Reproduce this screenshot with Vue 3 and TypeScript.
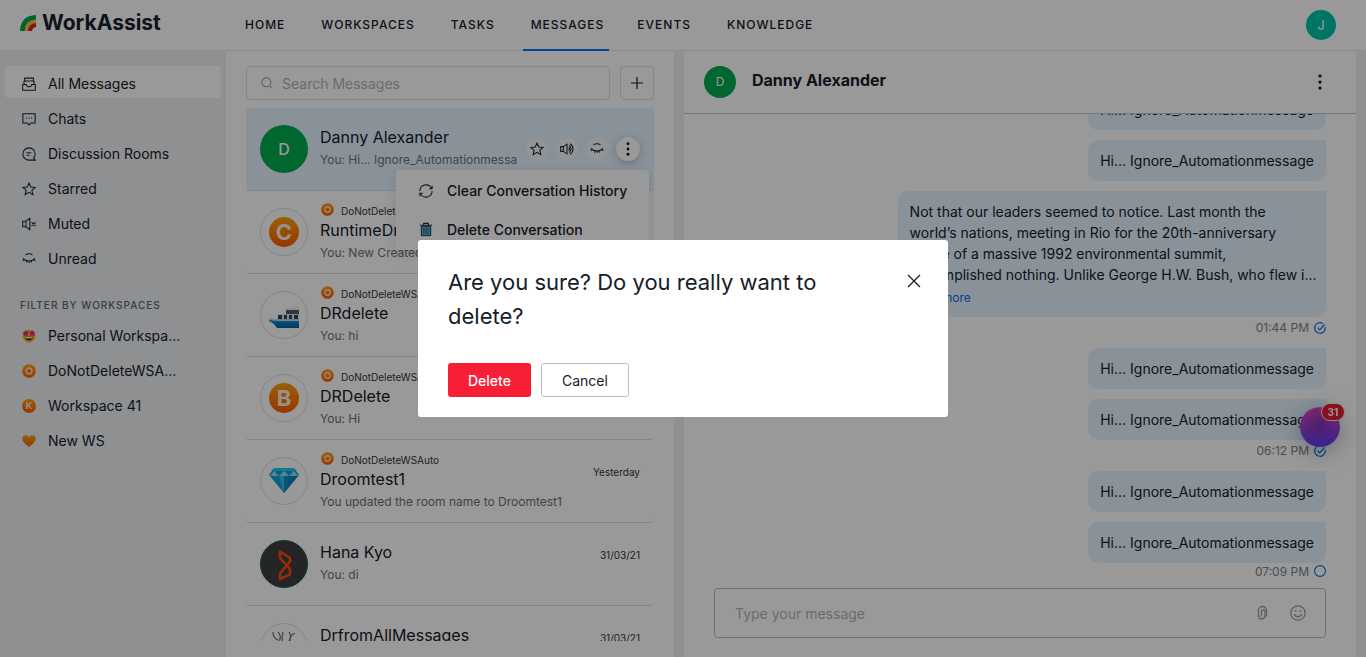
<script setup lang="ts">
import { ref } from 'vue'

interface NavItem { label: string; active?: boolean }
interface Conversation {
  id: number
  name: string
  preview: string
  avatar: 'green' | 'letter' | 'ship' | 'gem' | 'mark' | 'sketch'
  letter?: string
  workspace?: string
  date?: string
  open?: boolean
}
interface Message { id: number; text: string; long?: boolean; time?: string; state?: 'read' | 'sending' }

const nav: NavItem[] = [
  { label: 'HOME' },
  { label: 'WORKSPACES' },
  { label: 'TASKS' },
  { label: 'MESSAGES', active: true },
  { label: 'EVENTS' },
  { label: 'KNOWLEDGE' },
]

const folders = [
  { label: 'All Messages', icon: 'inbox' },
  { label: 'Chats', icon: 'chat' },
  { label: 'Discussion Rooms', icon: 'room' },
  { label: 'Starred', icon: 'star' },
  { label: 'Muted', icon: 'muted' },
  { label: 'Unread', icon: 'unread' },
]

const workspaces = [
  { label: 'Personal Workspa...', icon: 'face' },
  { label: 'DoNotDeleteWSA...', icon: 'ring' },
  { label: 'Workspace 41', icon: 'k' },
  { label: 'New WS', icon: 'heart' },
]

const conversations: Conversation[] = [
  { id: 1, name: 'Danny Alexander', preview: 'You: Hi... Ignore_Automationmessage', avatar: 'green', letter: 'D', open: true },
  { id: 2, name: 'RuntimeDroom', preview: 'You: New Created', avatar: 'letter', letter: 'C', workspace: 'DoNotDeleteWSAuto' },
  { id: 3, name: 'DRdelete', preview: 'You: hi', avatar: 'ship', workspace: 'DoNotDeleteWSAuto' },
  { id: 4, name: 'DRDelete', preview: 'You: Hi', avatar: 'letter', letter: 'B', workspace: 'DoNotDeleteWSAuto' },
  { id: 5, name: 'Droomtest1', preview: 'You updated the room name to Droomtest1', avatar: 'gem', workspace: 'DoNotDeleteWSAuto', date: 'Yesterday' },
  { id: 6, name: 'Hana Kyo', preview: 'You: di', avatar: 'mark', date: '31/03/21' },
  { id: 7, name: 'DrfromAllMessages', preview: 'You: hi', avatar: 'sketch', date: '31/03/21' },
]

const hi = 'Hi... Ignore_Automationmessage'
const messages: Message[] = [
  { id: 1, text: hi },
  { id: 2, text: hi },
  {
    id: 3,
    long: true,
    text: 'Not that our leaders seemed to notice. Last month the\nworld’s nations, meeting in Rio for the 20th-anniversary\nscene of a massive 1992 environmental summit,\naccomplished nothing. Unlike George H.W. Bush, who flew i...',
    time: '01:44 PM',
    state: 'read',
  },
  { id: 4, text: hi },
  { id: 5, text: hi, time: '06:12 PM', state: 'read' },
  { id: 6, text: hi },
  { id: 7, text: hi, time: '07:09 PM', state: 'sending' },
]

const search = ref('')
const draft = ref('')
const confirming = ref(true)
</script>

<template>
  <div class="app">
    <svg class="defs" aria-hidden="true">
      <defs>
        <linearGradient id="orange" x1="0" y1="0" x2="0" y2="1">
          <stop offset="0" stop-color="#ff9f0a" /><stop offset="1" stop-color="#ff5a00" />
        </linearGradient>
        <linearGradient id="hull" x1="0" y1="0" x2="0" y2="1">
          <stop offset="0" stop-color="#1c9be0" /><stop offset="1" stop-color="#00619c" />
        </linearGradient>
        <symbol id="i-inbox" viewBox="0 0 16 16">
          <path d="M3 4.300V1.300h10v3M2 4.500h12M2.300 4.500v4M13.700 4.500v4M.800 8.500v6.700h14.400V8.500h-4c-.2 1.800-1.300 2.700-3.200 2.700S5 10.300 4.800 8.500z" />
        </symbol>
        <symbol id="i-chat" viewBox="0 0 16 16">
          <path d="M1 2h14v10.500h-5L8 14.800l-2-2.300H1zM4.500 7h1M7.500 7h1M10.500 7h1" />
        </symbol>
        <symbol id="i-room" viewBox="0 0 16 16">
          <path d="M15.300 15H8A7 7 0 1 1 15 8c0 2-.7 3.700-1.900 4.900zM5.300 6.500h5.200M5.300 9.500h3.200" />
        </symbol>
        <symbol id="i-star" viewBox="0 0 16 16">
          <path d="m8 1.200 2 4.500 5 .5-3.700 3.300 1.100 5L8 11.900l-4.400 2.600 1.100-5L1 6.200l5-.5z" />
        </symbol>
        <symbol id="i-muted" viewBox="0 0 16 16">
          <path d="M.800 4.800h3.700v6.400H.800zM4.500 4.800 9 1.500v13l-4.500-3.300M11 5.800l4.500 4.500M15.500 5.800 11 10.300" />
        </symbol>
        <symbol id="i-sound" viewBox="0 0 16 16">
          <path d="M.800 5.300h3v5.400h-3zM3.800 5.300 8 2.500v11l-4.200-2.800M10 6a3 3 0 0 1 0 4M10.300 3.800a5 5 0 0 1 0 8.400M11.500 2a7 7 0 0 1 0 12" />
        </symbol>
        <symbol id="i-unread" viewBox="0 0 16 16">
          <path d="M4 3.200c2.600-1.500 5.400-1.500 8 0M1 7.200c3.800 4 10.200 4 14 0M2.800 8.600 .8 10.200M5.700 10.200l-.8 2M8 10.600v2.100M10.300 10.200l.8 2M13.200 8.600l2 1.600" />
        </symbol>
        <symbol id="i-refresh" viewBox="0 0 16 16">
          <path d="M1 8A7 7 0 0 1 14.300 5M15 8A7 7 0 0 1 1.700 11M15 2v3.400h-3.400M1 14v-3.400h3.400" />
        </symbol>
        <symbol id="i-ring" viewBox="0 0 14 14">
          <circle cx="7" cy="7" r="6.800" fill="url(#orange)" stroke="none" />
          <circle cx="7" cy="7" r="2.900" fill="none" stroke="#ffdfbd" stroke-width="1.500" />
        </symbol>
      </defs>
    </svg>

    <header class="topbar">
      <a class="brand" href="#">
        <svg class="rainbow" viewBox="0 0 16 16" aria-hidden="true">
          <path d="M2.500 16Q3 3 16 2.500" fill="none" stroke="#00a651" stroke-width="5" />
          <path d="M6.500 16Q7 7 16 6.500" fill="none" stroke="#f7c331" stroke-width="4" />
          <path d="M10 16Q10.500 10.500 16 10" fill="none" stroke="#e21b36" stroke-width="4" />
        </svg>
        <span>WorkAssist</span>
      </a>
      <nav class="nav">
        <a v-for="n in nav" :key="n.label" href="#" :class="{ active: n.active }">{{ n.label }}</a>
      </nav>
      <button class="me" aria-label="Account">J</button>
    </header>

    <main class="body">
      <aside class="side">
        <a v-for="(f, i) in folders" :key="f.label" href="#" class="side-item" :class="{ current: i === 0 }">
          <svg class="line-icon" aria-hidden="true"><use :href="'#i-' + f.icon" /></svg>
          <span>{{ f.label }}</span>
        </a>
        <h2 class="side-title">FILTER BY WORKSPACES</h2>
        <a v-for="w in workspaces" :key="w.label" href="#" class="side-item">
          <svg v-if="w.icon === 'face'" class="ws-icon" viewBox="0 0 14 14" aria-hidden="true">
            <circle cx="7" cy="7" r="6.500" fill="#ffb51f" />
            <path d="m3.800 1.500.9 1.600 1.900.3-1.300 1.400.3 1.900-1.800-.8-1.800.8.3-1.900L1 3.400l1.900-.3zM10.200 1.500l.9 1.600 1.900.3-1.300 1.400.3 1.900-1.800-.8-1.800.8.3-1.900-1.300-1.400 1.900-.3z" fill="#e0218a" stroke="#e0218a" stroke-width=".6" />
            <path d="M3.200 7.800h7.600c0 5-7.600 5-7.600 0z" fill="#4a2a18" />
            <path d="M3.800 8h6.400v1.300H3.800z" fill="#fff" />
          </svg>
          <svg v-else-if="w.icon === 'ring'" class="ws-icon" aria-hidden="true"><use href="#i-ring" /></svg>
          <span v-else-if="w.icon === 'k'" class="ws-icon ws-letter">K</span>
          <svg v-else class="ws-icon" viewBox="0 0 14 14" aria-hidden="true">
            <path d="M7 12.800C3 10 .3 7.500.3 4.700.3 1 5 .2 7 3.200 9 .2 13.700 1 13.700 4.700c0 2.800-2.700 5.300-6.700 8.100z" fill="url(#orange)" />
          </svg>
          <span>{{ w.label }}</span>
        </a>
      </aside>

      <section class="inbox">
        <div class="tools">
          <label class="search">
            <svg viewBox="0 0 12 12" aria-hidden="true"><circle cx="5.300" cy="5.300" r="4.500" /><path d="m8.600 8.600 2.800 2.800" /></svg>
            <input v-model="search" type="text" placeholder="Search Messages" aria-label="Search Messages" />
          </label>
          <button class="add" aria-label="New message">
            <svg viewBox="0 0 14 14" aria-hidden="true"><path d="M7 1v12M1 7h12" /></svg>
          </button>
        </div>

        <ul class="list">
          <li v-for="c in conversations" :key="c.id" class="row" :class="{ selected: c.open }">
            <span class="avatar" :class="c.avatar">
              <template v-if="c.avatar === 'green'">{{ c.letter }}</template>
              <span v-else-if="c.avatar === 'letter'" class="disc">{{ c.letter }}</span>
              <svg v-else-if="c.avatar === 'ship'" viewBox="0 0 30 30" aria-hidden="true">
                <path d="M17 9h13v5H17z" fill="#4c5866" />
                <path d="M17 8h13v2H17zM22 6h8v1h-8z" fill="#e8eaed" />
                <path d="M9 14h21v6H9z" fill="#dfe4e8" />
                <path d="M9 15h4v4H9zM15 15h3v4h-3zM20 15h3v4h-3zM25 15h4v4h-4z" fill="#3a3f4a" />
                <path d="M0 18.500 9 19.500H30V28H8Q5 23 0 21z" fill="url(#hull)" />
                <path d="M0 18 9 19.500H30V21H9L0 20z" fill="#cfdbe6" />
              </svg>
              <svg v-else-if="c.avatar === 'gem'" viewBox="0 0 30 30" aria-hidden="true">
                <path d="M5 2h20l5 7-15 18L0 9z" fill="#0ba4dc" />
                <path d="M5 2h20l3 3H2z" fill="#22c8ee" />
                <path d="M5 5 10 10H1zM25 5l4 5h-9zM15 5l5 5H10z" fill="#8edff5" />
                <path d="M20 10h9L15 27z" fill="#0783bf" />
                <path d="M10 10h5v17z" fill="#36bde9" />
                <path d="M15 10h5l-5 17z" fill="#0a8fca" />
              </svg>
              <svg v-else-if="c.avatar === 'mark'" viewBox="0 0 48 48" aria-hidden="true">
                <path d="M19 10.500v6.500L29 28v5.500L19 38v-5.500L29 20.500V17z" fill="none" stroke="#ff4a0a" stroke-width="2.500" stroke-linejoin="round" />
              </svg>
              <svg v-else viewBox="0 0 30 30" aria-hidden="true">
                <path d="M4 0q0 6 5 8M9 0q4 4 1 9M14 0q-1 5-1 9M20 0q3 4 0 9M26 1q-5 2-5 8" fill="none" stroke="#777" stroke-width="1.300" />
              </svg>
            </span>

            <div class="who" :class="{ grouped: c.workspace }">
              <div v-if="c.workspace" class="ws">
                <svg aria-hidden="true"><use href="#i-ring" /></svg>
                <span>{{ c.workspace }}</span>
              </div>
              <div class="name">{{ c.name }}</div>
              <div class="preview">{{ c.preview }}</div>
            </div>

            <time v-if="c.date" class="date">{{ c.date }}</time>

            <div v-if="c.open" class="actions">
              <button aria-label="Star"><svg class="line-icon"><use href="#i-star" /></svg></button>
              <button aria-label="Mute"><svg class="line-icon"><use href="#i-sound" /></svg></button>
              <button aria-label="Mark unread"><svg class="line-icon"><use href="#i-unread" /></svg></button>
              <button class="more" aria-label="More">
                <svg class="kebab" viewBox="0 0 4 16"><circle cx="2" cy="2" r="1.600" /><circle cx="2" cy="8" r="1.600" /><circle cx="2" cy="14" r="1.600" /></svg>
              </button>
            </div>

            <div v-if="c.open" class="menu" role="menu">
              <button role="menuitem">
                <svg class="line-icon" aria-hidden="true"><use href="#i-refresh" /></svg>
                Clear Conversation History
              </button>
              <button role="menuitem" @click="confirming = true">
                <svg class="trash" viewBox="0 0 14 16" aria-hidden="true">
                  <path d="M2 4.500h10v10H2z" fill="#58b5e8" stroke="#1b2b38" />
                  <path d="M.500 3.500h13M4.500 3V1.500h5V3" fill="none" stroke="#1b2b38" stroke-width="1.200" />
                  <path d="M4.700 6v7M7 6v7M9.300 6v7" stroke="#1b2b38" stroke-width=".7" />
                </svg>
                Delete Conversation
              </button>
            </div>
          </li>
        </ul>
      </section>

      <section class="chat">
        <header class="chat-head">
          <span class="chat-avatar">D</span>
          <h1>Danny Alexander</h1>
          <button class="chat-more" aria-label="Conversation options">
            <svg class="kebab" viewBox="0 0 4 16"><circle cx="2" cy="2" r="1.600" /><circle cx="2" cy="8" r="1.600" /><circle cx="2" cy="14" r="1.600" /></svg>
          </button>
        </header>

        <div class="thread">
          <div v-for="m in messages" :key="m.id" class="msg">
            <div class="bubble" :class="{ long: m.long }">
              <p>{{ m.text }}</p>
              <a v-if="m.long" href="#">Read more</a>
            </div>
            <div v-if="m.time" class="stamp">
              <time>{{ m.time }}</time>
              <svg viewBox="0 0 12 12" aria-hidden="true">
                <template v-if="m.state === 'read'">
                  <path d="M11.200 5.200A5.300 5.300 0 1 1 8.800 1.500" /><path d="m3.600 5.700 2 2.100 5-5.300" />
                </template>
                <circle v-else cx="6" cy="6" r="5.400" />
              </svg>
            </div>
          </div>
        </div>

        <div class="composer">
          <input v-model="draft" type="text" placeholder="Type your message" aria-label="Type your message" />
          <button aria-label="Attach file">
            <svg viewBox="0 0 16 16" aria-hidden="true"><path d="M12.500 5v6.500M12.500 5.500a4 4 0 0 0-8 0v6a3.400 3.400 0 0 0 6.500 0V6a2 2 0 0 0-3.500 0v5.500" /></svg>
          </button>
          <button aria-label="Insert emoji">
            <svg viewBox="0 0 16 16" aria-hidden="true"><circle cx="8" cy="8" r="7.200" /><path d="M4.300 9.300c1.300 3.200 6.100 3.200 7.400 0" /><path d="M5.500 5.300v1.400M10.500 5.300v1.400" stroke-width="1.800" /></svg>
          </button>
        </div>
      </section>
    </main>

    <button class="launcher" aria-label="Open assistant"><span>31</span></button>

    <div v-if="confirming" class="overlay">
      <div class="dialog" role="dialog" aria-modal="true" aria-labelledby="confirm-title">
        <div class="dialog-top">
          <h2 id="confirm-title">Are you sure? Do you really want to delete?</h2>
          <button class="close" aria-label="Close" @click="confirming = false">
            <svg viewBox="0 0 14 14" aria-hidden="true"><path d="m1 1 12 12M13 1 1 13" /></svg>
          </button>
        </div>
        <div class="dialog-actions">
          <button class="danger" @click="confirming = false">Delete</button>
          <button class="plain" @click="confirming = false">Cancel</button>
        </div>
      </div>
    </div>
  </div>
</template>

<style>
body {
  margin: 0;
  overflow: hidden;
}
</style>

<style scoped>
.app {
  display: flex;
  flex-direction: column;
  height: 100vh;
  overflow: hidden;
  background: #fff;
  color: #16202a;
  font-family: Inter, "Liberation Sans", sans-serif;
  font-size: 14px;
}
.app * { box-sizing: border-box; }
a { color: inherit; text-decoration: none; }
button { padding: 0; border: 0; background: none; color: inherit; font: inherit; cursor: pointer; }
input { min-width: 0; padding: 0; border: 0; outline: 0; background: none; color: inherit; font: inherit; }
h1, h2, p, ul { margin: 0; padding: 0; }
.defs { position: absolute; width: 0; height: 0; }
.line-icon { width: 14px; height: 14px; flex: none; margin: 0 1px; fill: none; stroke: #1b2530; stroke-width: 1.2; }
.kebab { display: block; width: 4px; height: 16px; fill: #0c1116; }

.topbar {
  display: flex;
  align-items: center;
  flex: none;
  height: 51px;
  padding: 0 30px 0 20px;
  border-bottom: 1px solid #e6e8ea;
}
.brand {
  display: flex;
  align-items: center;
  gap: 6px;
  width: 217px;
  padding-bottom: 5px;
  font-size: 21px;
  font-weight: 700;
}
.rainbow { width: 16px; height: 16px; }
.nav { display: flex; flex: 1; gap: 20px; height: 51px; }
.nav a {
  display: flex;
  align-items: center;
  padding: 0 8px;
  border-bottom: 2px solid transparent;
  font-size: 12px;
  font-weight: 500;
  letter-spacing: 1px;
}
.nav a.active { padding-right: 5px; border-color: #0074f5; }
.me { width: 30px; height: 30px; border-radius: 50%; background: #00c2a8; color: #fff; font-size: 13px; }

.body {
  display: grid;
  grid-template-columns: 226px minmax(0, 2fr) 10px minmax(0, 3fr);
  grid-template-rows: minmax(0, 1fr);
  flex: 1;
  min-height: 0;
  padding-right: 10px;
  background: #edf0f3;
}
.side { padding: 15px 5px; }
.side-item {
  display: flex;
  align-items: center;
  gap: 11px;
  height: 32px;
  margin-bottom: 3px;
  padding: 3px 16px 0;
  border-radius: 4px;
}
.side-item.current { background: #fff; }
.ws-icon { width: 14px; height: 14px; flex: none; margin: 0 1px; }
.ws-letter {
  border-radius: 50%;
  background: linear-gradient(#ff9f0a, #ff5a00);
  color: #ffe9d1;
  font-size: 9px;
  font-weight: 700;
  line-height: 14px;
  text-align: center;
}
.side-title {
  padding: 21px 15px 5px;
  color: #5f666e;
  font-size: 10px;
  font-weight: 500;
  line-height: 16px;
  letter-spacing: 1px;
}

.inbox {
  display: flex;
  flex-direction: column;
  min-width: 0;
  padding: 15px 20px 16px;
  background: #fff;
}
.tools { display: flex; flex: none; gap: 10px; height: 34px; margin-bottom: 8px; }
.search {
  display: flex;
  flex: 1;
  align-items: center;
  gap: 9px;
  padding: 0 14px;
  border: 1px solid #dcdfe2;
  border-radius: 4px;
}
.search svg { width: 12px; height: 12px; fill: none; stroke: #a6acb2; stroke-width: 1.2; }
.search input { flex: 1; }
input::placeholder { color: #b0b5ba; opacity: 1; }
.add { display: grid; place-items: center; width: 34px; border: 1px solid #dcdfe2; border-radius: 4px; }
.add svg { width: 14px; height: 14px; stroke: #16202a; stroke-width: 1.2; }

.list { flex: 1; min-height: 0; overflow: hidden; list-style: none; }
.row {
  position: relative;
  display: flex;
  align-items: center;
  gap: 12px;
  height: 83px;
  padding: 0 14px;
  border-bottom: 1px solid #d9dcdf;
  border-radius: 4px;
}
.row.selected { z-index: 1; gap: 9px; background: #e6f4ff; }
.row.selected .avatar { margin-right: 3px; }
.avatar {
  display: grid;
  place-items: center;
  width: 48px;
  height: 48px;
  flex: none;
  border: 1px solid #dcdfe2;
  border-radius: 50%;
}
.avatar svg { width: 30px; height: 30px; }
.avatar.green { border: 0; background: #00ac4e; color: #fff; font-size: 16px; font-weight: 500; }
.avatar.mark { border-color: #14584f; background: #3e3f42; }
.avatar.mark svg { width: 48px; height: 48px; }
.disc {
  width: 30px;
  height: 30px;
  border-radius: 50%;
  background: linear-gradient(#ff9f0a, #ff5a00);
  color: #fff0df;
  font-size: 22px;
  font-weight: 700;
  line-height: 30px;
  text-align: center;
}
.who { flex: 1; min-width: 0; padding-bottom: 2px; overflow: hidden; white-space: nowrap; }
.who.grouped { padding: 2px 0 0; }
.ws { display: flex; align-items: center; gap: 7px; height: 16px; padding-left: 1px; font-size: 10px; color: #30363d; }
.ws svg { width: 13px; height: 13px; margin-bottom: 2px; }
.name { font-size: 16px; line-height: 22px; }
.preview { overflow: hidden; margin-top: 1px; color: #6b7178; font-size: 12px; line-height: 22px; }
.date { align-self: flex-start; padding-top: 24px; font-size: 10px; line-height: 17px; color: #30363d; }

.actions { display: flex; align-items: center; gap: 8px; }
.actions button { display: grid; place-items: center; width: 22px; height: 22px; border-radius: 50%; background: #f6f7f9; }
.actions .more { width: 24px; height: 24px; background: #fff; box-shadow: 0 2px 8px rgba(0, 20, 60, 0.25); }
.more .kebab { height: 14px; }
.menu {
  position: absolute;
  top: 62px;
  right: 5px;
  width: 253px;
  padding: 1px 0;
  border-radius: 4px;
  background: #fff;
  box-shadow: 0 4px 14px rgba(0, 0, 0, 0.12);
}
.menu button {
  display: flex;
  align-items: center;
  gap: 13px;
  width: 100%;
  height: 39px;
  padding: 0 22px;
  font-weight: 500;
  text-align: left;
  white-space: nowrap;
}
.trash { width: 14px; height: 15px; margin: 0 1px; }

.chat { display: flex; flex-direction: column; grid-column: 4; min-width: 0; background: #fff; }
.chat-head {
  display: flex;
  align-items: center;
  flex: none;
  gap: 16px;
  height: 63px;
  padding: 0 34px 0 20px;
  border-bottom: 1px solid #c3c8cc;
}
.chat-avatar {
  width: 32px;
  height: 32px;
  border-radius: 50%;
  background: #00ac4e;
  color: #fff;
  font-size: 12px;
  line-height: 32px;
  text-align: center;
}
.chat-head h1 { flex: 1; padding-bottom: 4px; font-size: 16px; font-weight: 700; }

.thread {
  display: flex;
  flex: 1;
  flex-direction: column;
  justify-content: flex-end;
  gap: 10px;
  min-height: 0;
  overflow: hidden;
  padding: 0 30px 9px;
}
.msg { display: flex; flex: none; flex-direction: column; align-items: flex-end; }
.bubble {
  max-width: 70%;
  padding: 10px 12px;
  border-radius: 10px 0 10px 10px;
  background: #e6f4ff;
  line-height: 21px;
  white-space: pre-line;
}
.bubble.long { width: 70%; padding-right: 6px; }
.bubble a { display: block; padding-top: 4px; color: #0a66ea; font-size: 12px; line-height: 18px; }
.stamp { display: flex; align-items: center; gap: 5px; height: 21px; color: #7d8389; font-size: 12px; }
.msg:last-child .stamp { height: 16px; }
.stamp svg { width: 12px; height: 12px; fill: none; stroke: #0a6fe0; stroke-width: 1.2; }

.composer {
  display: flex;
  align-items: center;
  flex: none;
  gap: 20px;
  height: 50px;
  margin: 0 30px 19px;
  padding: 0 19px 0 20px;
  border: 1px solid #b5babf;
  border-radius: 4px;
}
.composer input { flex: 1; }
.composer svg { display: block; width: 16px; height: 16px; fill: none; stroke: #999fa5; stroke-width: 1.3; }

.launcher {
  position: fixed;
  right: 26px;
  bottom: 210px;
  width: 40px;
  height: 40px;
  border-radius: 50%;
  background: radial-gradient(circle at 50% 45%, rgba(80, 40, 150, 0.45), transparent 70%), linear-gradient(#e83fb4, #5a3cf0);
  box-shadow: 0 4px 24px rgba(0, 30, 60, 0.35);
}
.launcher span {
  position: absolute;
  top: -4px;
  right: -5px;
  width: 24px;
  height: 18px;
  border: 1px solid #e8e8e8;
  border-radius: 9px;
  background: #e01b30;
  color: #fff;
  font-size: 10px;
  font-weight: 700;
  line-height: 16px;
}

.overlay {
  position: fixed;
  z-index: 10;
  inset: 0;
  display: grid;
  place-items: center;
  background: rgba(0, 0, 0, 0.4);
}
.dialog { width: 530px; padding: 25px 27px 20px 30px; border-radius: 3px; background: #fff; }
.dialog-top { display: flex; justify-content: space-between; align-items: flex-start; }
.dialog h2 { max-width: 420px; font-size: 22px; font-weight: 400; line-height: 34px; }
.close { padding-top: 9px; }
.close svg { display: block; width: 14px; height: 14px; stroke: #16202a; stroke-width: 1.3; }
.dialog-actions { display: flex; gap: 10px; margin-top: 30px; }
.dialog-actions button { height: 34px; padding: 0 20px; border-radius: 3px; }
.danger { background: #f71e36; color: #fff; font-weight: 500; }
.plain { border: 1px solid #b9bec4; }
</style>
